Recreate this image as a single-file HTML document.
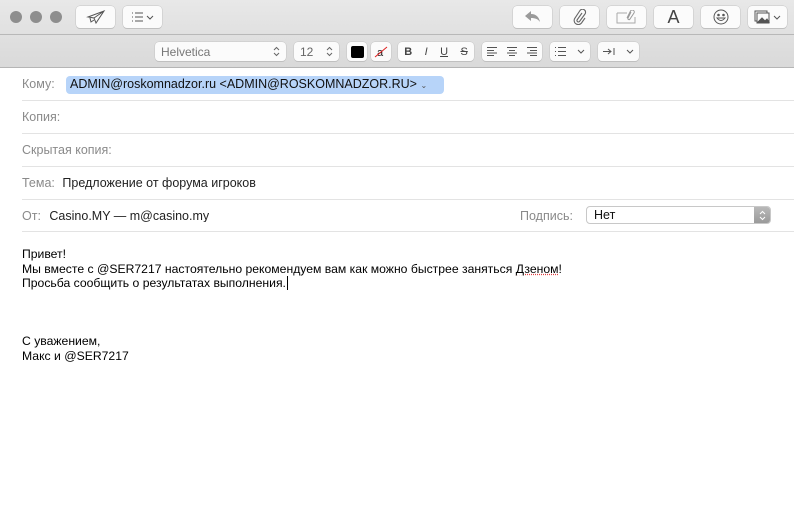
<!DOCTYPE html>
<html><head><meta charset="utf-8"><style>
*{margin:0;padding:0;box-sizing:border-box}
body{width:794px;height:515px;overflow:hidden;background:#fff;font-family:"Liberation Sans",sans-serif;position:relative}
.tb{position:absolute;left:0;top:0;width:794px;height:68px;background:linear-gradient(#e8e8e8,#d9d9d9)}
.l1{position:absolute;left:0;top:34px;width:794px;height:1px;background:#b8b8b8}
.l2{position:absolute;left:0;top:67px;width:794px;height:1px;background:#b5b5b5}
.tl{position:absolute;top:11px;width:12px;height:12px;border-radius:50%;background:#8e8e8e}
.b{position:absolute;background:#fbfbfb;border-radius:4px;box-shadow:0 0 0 .5px #c4c4c4,0 1px 0 #bcbcbc;display:flex;align-items:center;justify-content:center;color:#555}
.t{top:6px;height:22px;width:39px}
.f{top:42px;height:19px}
.lab{position:absolute;left:22px;font-size:12.5px;color:#8a8a8a}
.hl{position:absolute;left:22px;right:0;height:1px;background:#e3e3e3}
.v{color:#222}
.body{position:absolute;left:22px;top:247px;font-size:12.2px;line-height:14.5px;color:#000}
</style></head><body>
<div class="tb"></div><div class="l1"></div><div class="l2"></div>
<div class="tl" style="left:10px"></div><div class="tl" style="left:30px"></div><div class="tl" style="left:50px"></div>
<div class="b t" style="left:76px"><svg width="20" height="16" viewBox="0 0 20 16" fill="none" stroke="#555" stroke-width="1"><path d="M2 8 L18 2 L10 14 L8 9 Z M8 9 L18 2 M4 9 L5 13 L8 11"/></svg></div>
<div class="b t" style="left:123px"><svg width="24" height="10" viewBox="0 0 24 10" fill="none" stroke="#555" stroke-width="1"><path d="M1 1h1M1 5h1M1 9h1M4 1h8M4 5h8M4 9h8M16 4l3 3 3-3"/></svg></div>
<div class="b t" style="left:513px"><svg width="16" height="12" viewBox="0 0 16 12"><path d="M6 0 L0 5 L6 10 V7 C10 7 13 8 15 11 C14 6 11 3 6 3 Z" fill="#9a9a9a"/></svg></div>
<div class="b t" style="left:560px"><svg width="14" height="16" viewBox="0 0 14 16" fill="none" stroke="#666" stroke-width="1.1"><path d="M9 4 L4 11 a1.5 1.5 0 0 0 2.5 1.5 L12 5 a3 3 0 0 0 -5 -3.5 L2 9 a4 4 0 0 0 6.5 5 L12 9"/></svg></div>
<div class="b t" style="left:607px"><svg width="22" height="14" viewBox="0 0 22 14" fill="none" stroke="#aaa" stroke-width="1"><path d="M1 3h10M1 3v10h18V7M1 13"/><path d="M15 2 L12 8 a1 1 0 0 0 2 1 L18 3 a2 2 0 0 0 -3.5 -2 L11 8" stroke="#999"/></svg></div>
<div class="b t" style="left:654px;font-size:18px;color:#444">A</div>
<div class="b t" style="left:701px"><svg width="16" height="16" viewBox="0 0 16 16" fill="none" stroke="#555" stroke-width="1"><circle cx="8" cy="8" r="7"/><circle cx="5.5" cy="6" r=".8" fill="#555"/><circle cx="10.5" cy="6" r=".8" fill="#555"/><path d="M4 9 Q8 14 12 9 Z"/></svg></div>
<div class="b t" style="left:748px"><svg width="28" height="14" viewBox="0 0 28 14" fill="none" stroke="#555" stroke-width="1"><rect x="1" y="1" width="12" height="10"/><rect x="3" y="3" width="12" height="10" fill="#fbfbfb"/><path d="M4 12 L8 8 L11 11 L13 9 L15 12Z" fill="#555"/><path d="M20 6l3 3 3-3"/></svg></div>

<div class="b f" style="left:155px;width:131px;justify-content:space-between;padding:0 6px 0 6px;font-size:12px;color:#777"><span>Helvetica</span><svg width="7" height="11" fill="none" stroke="#666"><path d="M1 4l2.5-2.5L6 4M1 7l2.5 2.5L6 7"/></svg></div>
<div class="b f" style="left:294px;width:45px;justify-content:space-between;padding:0 6px;font-size:12px;color:#666"><span>12</span><svg width="7" height="11" fill="none" stroke="#666"><path d="M1 4l2.5-2.5L6 4M1 7l2.5 2.5L6 7"/></svg></div>
<div class="b f" style="left:347px;width:20px"><div style="width:13px;height:12px;background:#000;border-radius:2px"></div></div>
<div class="b f" style="left:371px;width:20px"><svg width="14" height="12"><text x="3" y="10" font-size="11" font-family="Liberation Sans" fill="#222">a</text><path d="M1 11 L13 1" stroke="#e02020"/></svg></div>
<div class="b f" style="left:398px;width:76px;justify-content:space-around;font-size:11px;color:#444"><b>B</b><i>I</i><u>U</u><s>S</s></div>
<div class="b f" style="left:482px;width:60px;justify-content:space-around"><svg width="10" height="9" stroke="#555"><path d="M0 .5h10M0 3.5h7M0 6h10M0 8.5h7"/></svg><svg width="10" height="9" stroke="#555"><path d="M0 .5h10M2 3.5h6M0 6h10M2 8.5h6"/></svg><svg width="10" height="9" stroke="#555"><path d="M0 .5h10M3 3.5h7M0 6h10M3 8.5h7"/></svg></div>
<div class="b f" style="left:550px;width:40px;justify-content:space-around"><svg width="11" height="9" stroke="#555"><path d="M0 .5h1M0 4.5h1M0 8.5h1M3 .5h8M3 4.5h8M3 8.5h8"/></svg><svg width="8" height="5" stroke="#555" fill="none"><path d="M1 1l3 3 3-3"/></svg></div>
<div class="b f" style="left:598px;width:41px;justify-content:space-around"><svg width="12" height="9" stroke="#555" fill="none"><path d="M0 4.5h8M5 2l3 2.5-3 2.5M11 1v7"/></svg><svg width="8" height="5" stroke="#555" fill="none"><path d="M1 1l3 3 3-3"/></svg></div>

<div class="lab" style="top:77px">Кому:</div>
<div style="position:absolute;left:66px;top:76px;width:378px;height:18px;background:#b7d4f9;border-radius:4px;font-size:12.5px;color:#111;padding:1px 0 0 4px;white-space:nowrap">ADMIN@roskomnadzor.ru &lt;ADMIN@ROSKOMNADZOR.RU&gt; <span style="font-size:8px;color:#555">⌄</span></div>
<div class="hl" style="top:100px"></div>
<div class="lab" style="top:110px">Копия:</div>
<div class="hl" style="top:133px"></div>
<div class="lab" style="top:143px">Скрытая копия:</div>
<div class="hl" style="top:166px"></div>
<div class="lab" style="top:176px">Тема: <span class="v" style="margin-left:4px">Предложение от форума игроков</span></div>
<div class="hl" style="top:199px"></div>
<div class="lab" style="top:209px;height:13px;overflow:hidden">От: <span class="v" style="margin-left:5px">Casino.MY — m@casino.my</span></div>
<div class="lab" style="left:520px;top:209px;height:13px;overflow:hidden">Подпись:</div>
<div style="position:absolute;left:586px;top:206px;width:185px;height:18px;border:1px solid #c8c8c8;border-radius:4px;background:#fff;font-size:12.5px;color:#111;padding:1px 0 0 7px">Нет<div style="position:absolute;right:0;top:0;width:16px;height:16px;background:linear-gradient(#b8b8b8,#9a9a9a);border-radius:0 3px 3px 0;display:flex;align-items:center;justify-content:center"><svg width="7" height="11" fill="none" stroke="#fff"><path d="M1 4l2.5-2.5L6 4M1 7l2.5 2.5L6 7"/></svg></div></div>
<div class="hl" style="top:231px"></div>

<div class="body">Привет!<br>Мы вместе с @SER7217 настоятельно рекомендуем вам как можно быстрее заняться <span style="text-decoration:underline dotted #e04040">Дзеном</span>!<br>Просьба сообщить о результатах выполнения.<span style="border-left:1px solid #000;margin-left:1px"></span><br><br><br><br>С уважением,<br>Макс и @SER7217</div>
</body></html>
